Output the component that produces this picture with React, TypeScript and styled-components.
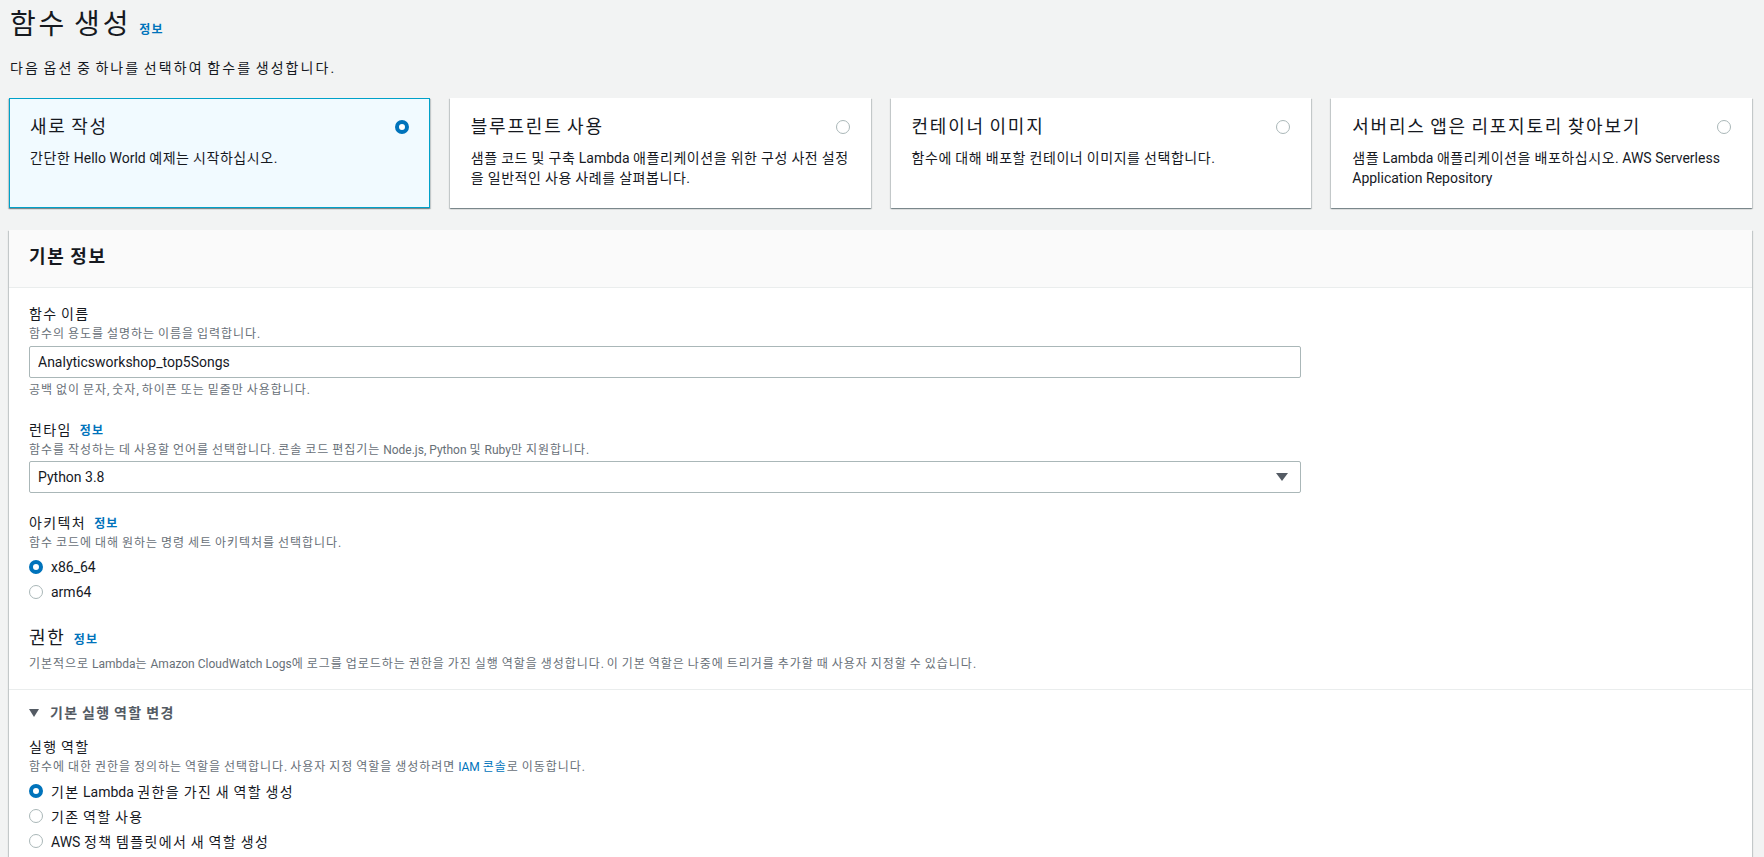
import { Fragment, ReactNode } from 'react';
import styled, { createGlobalStyle } from 'styled-components';

const GlobalStyle = createGlobalStyle`
  body {
    margin: 0;
    background: #f2f3f3;
    font-family: Roboto, "Noto Sans CJK KR", sans-serif;
    color: #16191f;
  }
  * {
    box-sizing: border-box;
  }
`;

// Hangul runs get extra tracking so they take the width they take in the console's own font
const Hangul = styled.span`
  letter-spacing: 0.1em;
`;

const k = (s: string): ReactNode =>
  s.split(/([\u1100-\u11ff\u3130-\u318f\uac00-\ud7af]+)/).map((part, i) =>
    i % 2 === 1 ? <Hangul key={i}>{part}</Hangul> : <Fragment key={i}>{part}</Fragment>
  );

interface Option {
  title: string;
  desc: string;
  selected?: boolean;
}

const options: Option[] = [
  { title: '새로 작성', desc: '간단한 Hello World 예제는 시작하십시오.', selected: true },
  { title: '블루프린트 사용', desc: '샘플 코드 및 구축 Lambda 애플리케이션을 위한 구성 사전 설정을 일반적인 사용 사례를 살펴봅니다.' },
  { title: '컨테이너 이미지', desc: '함수에 대해 배포할 컨테이너 이미지를 선택합니다.' },
  { title: '서버리스 앱은 리포지토리 찾아보기', desc: '샘플 Lambda 애플리케이션을 배포하십시오. AWS Serverless Application Repository' },
];

export default function App() {
  return (
    <>
      <GlobalStyle />
      <Page>
        <TitleRow>
          <PageTitle>{k('함수 생성')}</PageTitle>
          <InfoLink>{k('정보')}</InfoLink>
        </TitleRow>
        <Subtitle>{k('다음 옵션 중 하나를 선택하여 함수를 생성합니다.')}</Subtitle>

        <CardGrid>
          {options.map((o) => (
            <Card key={o.title} $selected={o.selected}>
              <CardHead>
                <CardTitle>{k(o.title)}</CardTitle>
                <Radio $checked={o.selected} />
              </CardHead>
              <CardDesc>{k(o.desc)}</CardDesc>
            </Card>
          ))}
        </CardGrid>

        <Panel>
          <PanelHeader>{k('기본 정보')}</PanelHeader>

          <Section>
            <Field>
              <Label>{k('함수 이름')}</Label>
              <Desc>{k('함수의 용도를 설명하는 이름을 입력합니다.')}</Desc>
              <Input defaultValue="Analyticsworkshop_top5Songs" />
              <Hint>{k('공백 없이 문자, 숫자, 하이픈 또는 밑줄만 사용합니다.')}</Hint>
            </Field>

            <Field $bottom={20}>
              <Label>
                {k('런타임')}
                <InfoLink $small>{k('정보')}</InfoLink>
              </Label>
              <Desc>
                {k('함수를 작성하는 데 사용할 언어를 선택합니다. 콘솔 코드 편집기는 Node.js, Python 및 Ruby만 지원합니다.')}
              </Desc>
              <Select>
                <span>Python 3.8</span>
                <svg width="12" height="8" viewBox="0 0 12 8">
                  <path d="M0 0 L12 0 L6 8 Z" fill="#545b64" />
                </svg>
              </Select>
            </Field>

            <Field>
              <Label>
                {k('아키텍처')}
                <InfoLink $small>{k('정보')}</InfoLink>
              </Label>
              <Desc>{k('함수 코드에 대해 원하는 명령 세트 아키텍처를 선택합니다.')}</Desc>
              <RadioList>
                <RadioRow>
                  <Radio $checked />
                  x86_64
                </RadioRow>
                <RadioRow>
                  <Radio />
                  arm64
                </RadioRow>
              </RadioList>
            </Field>

            <SubHeading>
              {k('권한')}
              <InfoLink $small>{k('정보')}</InfoLink>
            </SubHeading>
            <Desc $gap={5}>
              {k(
                '기본적으로 Lambda는 Amazon CloudWatch Logs에 로그를 업로드하는 권한을 가진 실행 역할을 생성합니다. 이 기본 역할은 나중에 트리거를 추가할 때 사용자 지정할 수 있습니다.'
              )}
            </Desc>
          </Section>

          <Section $divided>
            <Expander>
              <svg width="10" height="8" viewBox="0 0 10 8">
                <path d="M0 0 L10 0 L5 8 Z" fill="#545b64" />
              </svg>
              <span>{k('기본 실행 역할 변경')}</span>
            </Expander>
            <Field $top={14}>
              <Label>{k('실행 역할')}</Label>
              <Desc>
                {k('함수에 대한 권한을 정의하는 역할을 선택합니다. 사용자 지정 역할을 생성하려면 ')}
                <TextLink>{k('IAM 콘솔')}</TextLink>
                {k('로 이동합니다.')}
              </Desc>
              <RadioList>
                <RadioRow>
                  <Radio $checked />
                  <span>{k('기본 Lambda 권한을 가진 새 역할 생성')}</span>
                </RadioRow>
                <RadioRow>
                  <Radio />
                  <span>{k('기존 역할 사용')}</span>
                </RadioRow>
                <RadioRow>
                  <Radio />
                  <span>{k('AWS 정책 템플릿에서 새 역할 생성')}</span>
                </RadioRow>
              </RadioList>
            </Field>
          </Section>
        </Panel>
      </Page>
    </>
  );
}

const Page = styled.div`
  padding: 7px 12px 40px 9px;
`;

const TitleRow = styled.div`
  display: flex;
  align-items: baseline;
  gap: 8px;
  padding-left: 1px;
`;

const PageTitle = styled.h1`
  margin: 0;
  font-size: 28px;
  line-height: 36px;
  font-weight: 400;
`;

const InfoLink = styled.a<{ $small?: boolean }>`
  font-size: 12px;
  font-weight: 700;
  color: #0073bb;
  line-height: 16px;
  margin-left: ${(p) => (p.$small ? '8px' : '0')};
  cursor: pointer;
`;

const Subtitle = styled.p`
  margin: 15px 0 0 1px;
  font-size: 14px;
  line-height: 20px;

  ${Hangul} {
    letter-spacing: 0.15em;
  }
`;

const CardGrid = styled.div`
  display: grid;
  grid-template-columns: repeat(4, 1fr);
  gap: 20px;
  margin-top: 20px;
`;

const Card = styled.div<{ $selected?: boolean }>`
  height: 110px;
  padding: 16px 20px 0 20px;
  background: ${(p) => (p.$selected ? '#f1faff' : '#ffffff')};
  border: 1px solid ${(p) => (p.$selected ? '#00a1c9' : 'transparent')};
  box-shadow: 0 1px 1px 0 rgba(0, 28, 36, 0.3), 1px 1px 1px 0 rgba(0, 28, 36, 0.15),
    -1px 1px 1px 0 rgba(0, 28, 36, 0.15);
`;

const CardHead = styled.div`
  display: flex;
  align-items: center;
  justify-content: space-between;
`;

const CardTitle = styled.div`
  font-size: 18px;
  line-height: 24px;
`;

const CardDesc = styled.div`
  margin-top: 9px;
  font-size: 14px;
  line-height: 20px;

  ${Hangul} {
    letter-spacing: 0.04em;
  }
`;

const Radio = styled.span<{ $checked?: boolean }>`
  flex: none;
  display: inline-block;
  width: 14px;
  height: 14px;
  border-radius: 50%;
  background: #ffffff;
  border: ${(p) => (p.$checked ? '4px solid #0073bb' : '1.5px solid #aab7b8')};
`;

const Panel = styled.div`
  margin-top: 22px;
  background: #ffffff;
  box-shadow: 0 1px 1px 0 rgba(0, 28, 36, 0.3), 1px 1px 1px 0 rgba(0, 28, 36, 0.15),
    -1px 1px 1px 0 rgba(0, 28, 36, 0.15);
`;

const PanelHeader = styled.div`
  background: #fafafa;
  border-bottom: 1px solid #eaeded;
  padding: 15px 20px 18px;
  font-size: 18px;
  line-height: 24px;
  font-weight: 700;
`;

const Section = styled.div<{ $divided?: boolean }>`
  padding: ${(p) => (p.$divided ? '13px 20px 20px' : '16px 20px 16px')};
  border-top: ${(p) => (p.$divided ? '1px solid #eaeded' : 'none')};
`;

const Field = styled.div<{ $top?: number; $bottom?: number }>`
  margin-top: ${(p) => p.$top ?? 0}px;
  margin-bottom: ${(p) => p.$bottom ?? 22}px;
  max-width: 1272px;
`;

const Label = styled.div`
  font-size: 14px;
  line-height: 20px;
`;

const Desc = styled.div<{ $gap?: number }>`
  margin-top: ${(p) => p.$gap ?? 1}px;
  font-size: 12px;
  line-height: 18px;
  color: #687078;

  ${Hangul} {
    letter-spacing: 0.08em;
  }
`;

const Hint = styled.div`
  margin-top: 4px;
  font-size: 12px;
  line-height: 16px;
  color: #687078;

  ${Hangul} {
    letter-spacing: 0.08em;
  }
`;

const Input = styled.input`
  display: block;
  width: 100%;
  height: 32px;
  margin-top: 3px;
  padding: 0 8px;
  border: 1px solid #aab7b8;
  border-radius: 2px;
  font-family: inherit;
  font-size: 14px;
  color: #16191f;
  outline: none;
`;

const Select = styled.div`
  display: flex;
  align-items: center;
  justify-content: space-between;
  height: 32px;
  margin-top: 2px;
  padding: 0 12px 0 8px;
  border: 1px solid #aab7b8;
  border-radius: 2px;
  font-size: 14px;
`;

const RadioList = styled.div`
  margin-top: 2px;
`;

const RadioRow = styled.label`
  display: flex;
  align-items: center;
  gap: 8px;
  height: 25px;
  font-size: 14px;
`;

const SubHeading = styled.div`
  display: flex;
  align-items: baseline;
  margin-top: 2px;
  font-size: 18px;
  line-height: 24px;
`;

const Expander = styled.div`
  display: flex;
  align-items: center;
  gap: 11px;
  font-size: 14px;
  line-height: 20px;
  font-weight: 700;
  color: #545b64;
`;

const TextLink = styled.a`
  color: #0073bb;
`;
